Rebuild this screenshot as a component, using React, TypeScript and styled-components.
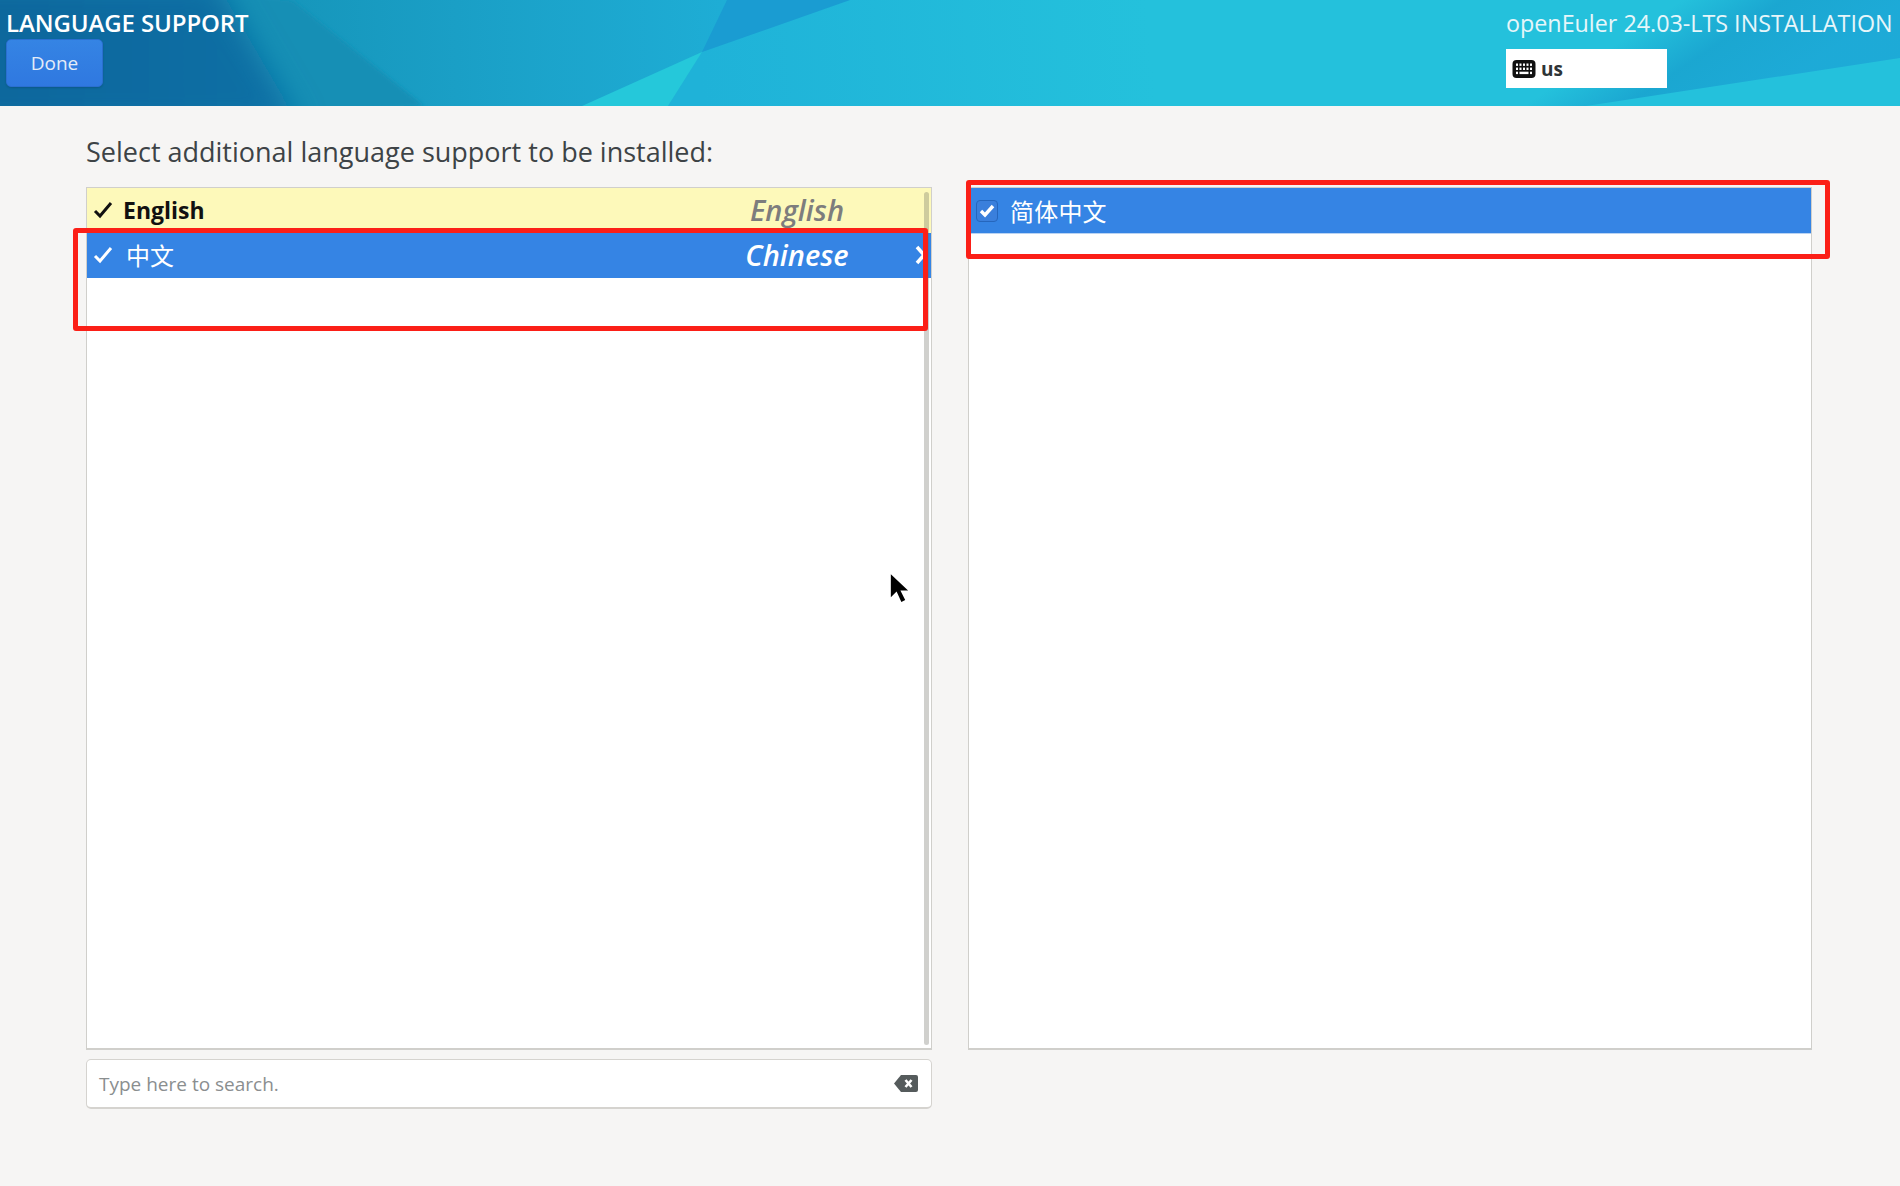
import React from "react";
import styled, { createGlobalStyle } from "styled-components";

const Global = createGlobalStyle`
  html, body { margin: 0; padding: 0; height: 100%; }
  body { background: #f6f5f4; font-family: "Open Sans", "Noto Sans", sans-serif; color: #2e3436; }
  #root { height: 100%; }
`;

const Page = styled.div`
  position: relative;
  width: 1900px;
  height: 1186px;
  overflow: hidden;
  background: #f6f5f4;
`;

const Header = styled.header`
  position: relative;
  height: 106px;
  box-sizing: border-box;
  padding: 8px 7px 0 6px;
  display: flex;
  justify-content: space-between;
  overflow: hidden;
  background: linear-gradient(90deg, #1696bb 0%, #1696bb 15%, #1a9fc6 24%, #1eadd5 38%, #1fb1d8 44%, #24c1dc 52%, #24c1dc 100%);
`;

const HeaderArt = styled.svg`
  position: absolute;
  inset: 0;
  width: 100%;
  height: 100%;
`;

const HeaderLeft = styled.div`
  position: relative;
  display: flex;
  flex-direction: column;
  align-items: flex-start;
`;

const Title = styled.div`
  font-size: 24px;
  line-height: 30px;
  font-weight: 600;
  letter-spacing: -0.1px;
  color: #fff;
  white-space: nowrap;
`;

const DoneButton = styled.button`
  margin-top: 1px;
  width: 97px;
  height: 48px;
  border: 1px solid #2a6fd0;
  border-radius: 5px;
  background: linear-gradient(#3584e4, #2f78e0);
  color: #e3ecf8;
  font: 400 19px "Open Sans", sans-serif;
  box-shadow: 0 1px 2px rgba(0, 0, 0, 0.15);
`;

const HeaderRight = styled.div`
  position: relative;
  display: flex;
  flex-direction: column;
  align-items: flex-start;
  width: 387px;
`;

const Product = styled.div`
  font-size: 23.3px;
  line-height: 30px;
  color: #e6f6fa;
  white-space: nowrap;
`;

const KeyboardBox = styled.div`
  margin-top: 11px;
  width: 161px;
  height: 39px;
  box-sizing: border-box;
  background: #fff;
  padding: 0 6px;
  display: flex;
  align-items: center;
  gap: 5px;
  font-size: 19px;
  font-weight: 700;
  color: #2e3436;
`;

const Content = styled.main`
  padding: 27px 0 0 86px;
`;

const Prompt = styled.h1`
  margin: 0 0 16px;
  font-size: 27px;
  line-height: 38px;
  font-weight: 400;
  color: #3d4346;
  white-space: nowrap;
`;

const Columns = styled.div`
  display: grid;
  grid-template-columns: 846px 844px;
  column-gap: 36px;
`;

const ListBox = styled.div`
  position: relative;
  height: 863px;
  box-sizing: border-box;
  border: 1px solid #d0cfcb;
  border-bottom-width: 2px;
  background: #fff;
`;

const LangRow = styled.div<{ $selected?: boolean }>`
  height: 45px;
  display: flex;
  align-items: center;
  box-sizing: border-box;
  padding-bottom: 2px;
  background: ${(p) => (p.$selected ? "#3584e4" : "#fdf9ba")};
  color: ${(p) => (p.$selected ? "#fff" : "#111")};
`;

const CheckCell = styled.span`
  width: 36px;
  flex: none;
  display: flex;
  justify-content: center;
  box-sizing: border-box;
  padding-right: 5px;
`;

const NativeName = styled.span`
  flex: 1;
  font-size: 23px;
  font-weight: 700;
`;

const CjkName = styled(NativeName)`
  font-family: "Noto Sans CJK SC", sans-serif;
  font-size: 24px;
  font-weight: 400;
  padding-left: 3px;
`;

const EnglishName = styled.span<{ $selected?: boolean }>`
  width: 160px;
  flex: none;
  text-align: center;
  font-size: 29px;
  font-style: italic;
  font-weight: 600;
  color: ${(p) => (p.$selected ? "#fff" : "#7d7d7d")};
`;

const ArrowCell = styled.span`
  width: 54px;
  flex: none;
  display: flex;
  justify-content: flex-end;
  padding-right: 4px;
  box-sizing: border-box;
`;

const Scrollbar = styled.div`
  position: absolute;
  top: 4px;
  right: 2px;
  bottom: 3px;
  width: 5px;
  border-radius: 3px;
  background: rgba(100, 100, 90, 0.3);
`;

const LocaleRow = styled.div`
  height: 46px;
  box-sizing: border-box;
  display: flex;
  align-items: center;
  gap: 12px;
  padding-left: 7px;
  background: #3584e4;
  border-bottom: 1px solid #b9d3f3;
  color: #fff;
`;

const CheckBoxMark = styled.span`
  width: 22px;
  height: 22px;
  box-sizing: border-box;
  border-radius: 4px;
  border: 1px solid #2566bd;
  background: #3a7fdc;
  display: flex;
  align-items: center;
  justify-content: center;
`;

const LocaleName = styled.span`
  font-family: "Noto Sans CJK SC", sans-serif;
  font-size: 24px;
  letter-spacing: 0.2px;
`;

const SearchBox = styled.div`
  margin-top: 9px;
  width: 846px;
  height: 50px;
  box-sizing: border-box;
  border: 1px solid #d5d3cf;
  border-bottom-width: 2px;
  border-radius: 5px;
  background: #fff;
  display: flex;
  align-items: center;
  justify-content: space-between;
  padding: 0 12px;
  font-size: 19px;
  color: #8a8e8f;
`;

const RedFrame = styled.div<{ $x: number; $y: number; $w: number; $h: number }>`
  position: absolute;
  left: ${(p) => p.$x}px;
  top: ${(p) => p.$y}px;
  width: ${(p) => p.$w}px;
  height: ${(p) => p.$h}px;
  box-sizing: border-box;
  border: 5px solid #fb1f17;
  border-radius: 3px;
`;

const Cursor = styled.svg`
  position: absolute;
  left: 887px;
  top: 572px;
  width: 23px;
  height: 35px;
  filter: drop-shadow(0 0 2px rgba(255, 255, 255, 0.9));
`;

const Check = ({ color }: { color: string }) => (
  <svg width="20" height="18" viewBox="0 0 20 18">
    <path d="M2 10l5 5L18 2" fill="none" stroke={color} strokeWidth="3" />
  </svg>
);

const KeyboardIcon = () => (
  <svg width="24" height="20" viewBox="0 0 24 20">
    <rect x="0.5" y="1" width="23" height="18" rx="4" fill="#111" />
    <g fill="#fff">
      {[4, 7.5, 11, 14.5, 18].map((x) => (
        <rect key={x} x={x} y="4.5" width="2" height="2.4" />
      ))}
      {[4, 7.5, 11, 14.5, 18].map((x) => (
        <rect key={x} x={x} y="8.6" width="2" height="2.4" />
      ))}
      <rect x="4" y="12.7" width="2" height="2.4" />
      <rect x="7.5" y="12.7" width="9" height="2.4" />
      <rect x="18" y="12.7" width="2" height="2.4" />
    </g>
  </svg>
);

const ClearIcon = () => (
  <svg width="26" height="19" viewBox="0 0 26 19">
    <path d="M8 1h15a2 2 0 0 1 2 2v13a2 2 0 0 1-2 2H8L1 9.5z" fill="#555b5c" />
    <path d="M12.5 6l6 7M18.5 6l-6 7" stroke="#fff" strokeWidth="2.6" />
  </svg>
);

export default function App() {
  return (
    <Page>
      <Global />
      <Header>
        <HeaderArt viewBox="0 0 1900 106" preserveAspectRatio="none">
          <defs>
            <linearGradient id="dark" x1="0" y1="0" x2="300" y2="0" gradientUnits="userSpaceOnUse">
              <stop offset="0" stopColor="#0a679d" />
              <stop offset="1" stopColor="#0b70a5" />
            </linearGradient>
            <linearGradient id="under" x1="700" y1="70" x2="1150" y2="30" gradientUnits="userSpaceOnUse">
              <stop offset="0" stopColor="#1fb2d8" />
              <stop offset="1" stopColor="#24c1dc" />
            </linearGradient>
            <linearGradient id="ridge" x1="1500" y1="0" x2="1625" y2="187" gradientUnits="userSpaceOnUse">
              <stop offset="0.45" stopColor="#19a2cf" stopOpacity="0" />
              <stop offset="0.7" stopColor="#19a2cf" stopOpacity="0.85" />
              <stop offset="1" stopColor="#1ca6d6" stopOpacity="0.85" />
            </linearGradient>
            <filter id="soft" x="-15%" y="-30%" width="130%" height="160%">
              <feGaussianBlur stdDeviation="14" />
            </filter>
            <filter id="softer" x="-15%" y="-30%" width="130%" height="160%">
              <feGaussianBlur stdDeviation="2" />
            </filter>
          </defs>
          <polygon points="200,-10 292,0 424,106 270,116" fill="#148fb5" filter="url(#softer)" />
          <polygon points="-40,-20 215,-20 300,126 -40,126" fill="url(#dark)" filter="url(#soft)" />
          <polygon points="850,0 702,52 668,106 1300,106 1300,0" fill="url(#under)" />
          <polygon points="702,52 727,0 850,0" fill="#1a9cd2" />
          <polygon points="582,106 702,52 668,106" fill="#25c8da" />
          <polygon points="1300,106 1586,106 1900,58 1900,0 1300,0" fill="url(#ridge)" />
        </HeaderArt>
        <HeaderLeft>
          <Title>LANGUAGE SUPPORT</Title>
          <DoneButton>Done</DoneButton>
        </HeaderLeft>
        <HeaderRight>
          <Product>openEuler 24.03-LTS INSTALLATION</Product>
          <KeyboardBox>
            <KeyboardIcon />
            us
          </KeyboardBox>
        </HeaderRight>
      </Header>
      <Content>
        <Prompt>Select additional language support to be installed:</Prompt>
        <Columns>
          <div>
            <ListBox>
              <LangRow>
                <CheckCell><Check color="#111" /></CheckCell>
                <NativeName>English</NativeName>
                <EnglishName>English</EnglishName>
                <ArrowCell />
              </LangRow>
              <LangRow $selected>
                <CheckCell><Check color="#fff" /></CheckCell>
                <CjkName>中文</CjkName>
                <EnglishName $selected>Chinese</EnglishName>
                <ArrowCell>
                  <svg width="12" height="20" viewBox="0 0 12 20">
                    <path d="M2 2l7 8-7 8" fill="none" stroke="#fff" strokeWidth="3.5" />
                  </svg>
                </ArrowCell>
              </LangRow>
              <Scrollbar />
            </ListBox>
            <SearchBox>
              Type here to search.
              <ClearIcon />
            </SearchBox>
          </div>
          <ListBox>
            <LocaleRow>
              <CheckBoxMark>
                <svg width="16" height="14" viewBox="0 0 16 14">
                  <path d="M2 7l4 4 8-9" fill="none" stroke="#fff" strokeWidth="3.4" />
                </svg>
              </CheckBoxMark>
              <LocaleName>简体中文</LocaleName>
            </LocaleRow>
          </ListBox>
        </Columns>
      </Content>
      <RedFrame $x={73} $y={228} $w={855} $h={103} />
      <RedFrame $x={966} $y={180} $w={864} $h={79} />
      <Cursor viewBox="0 0 24 36">
        <path d="M4 2v24l6-6 5 11 4-2-5-10h8z" fill="#000" />
      </Cursor>
    </Page>
  );
}
